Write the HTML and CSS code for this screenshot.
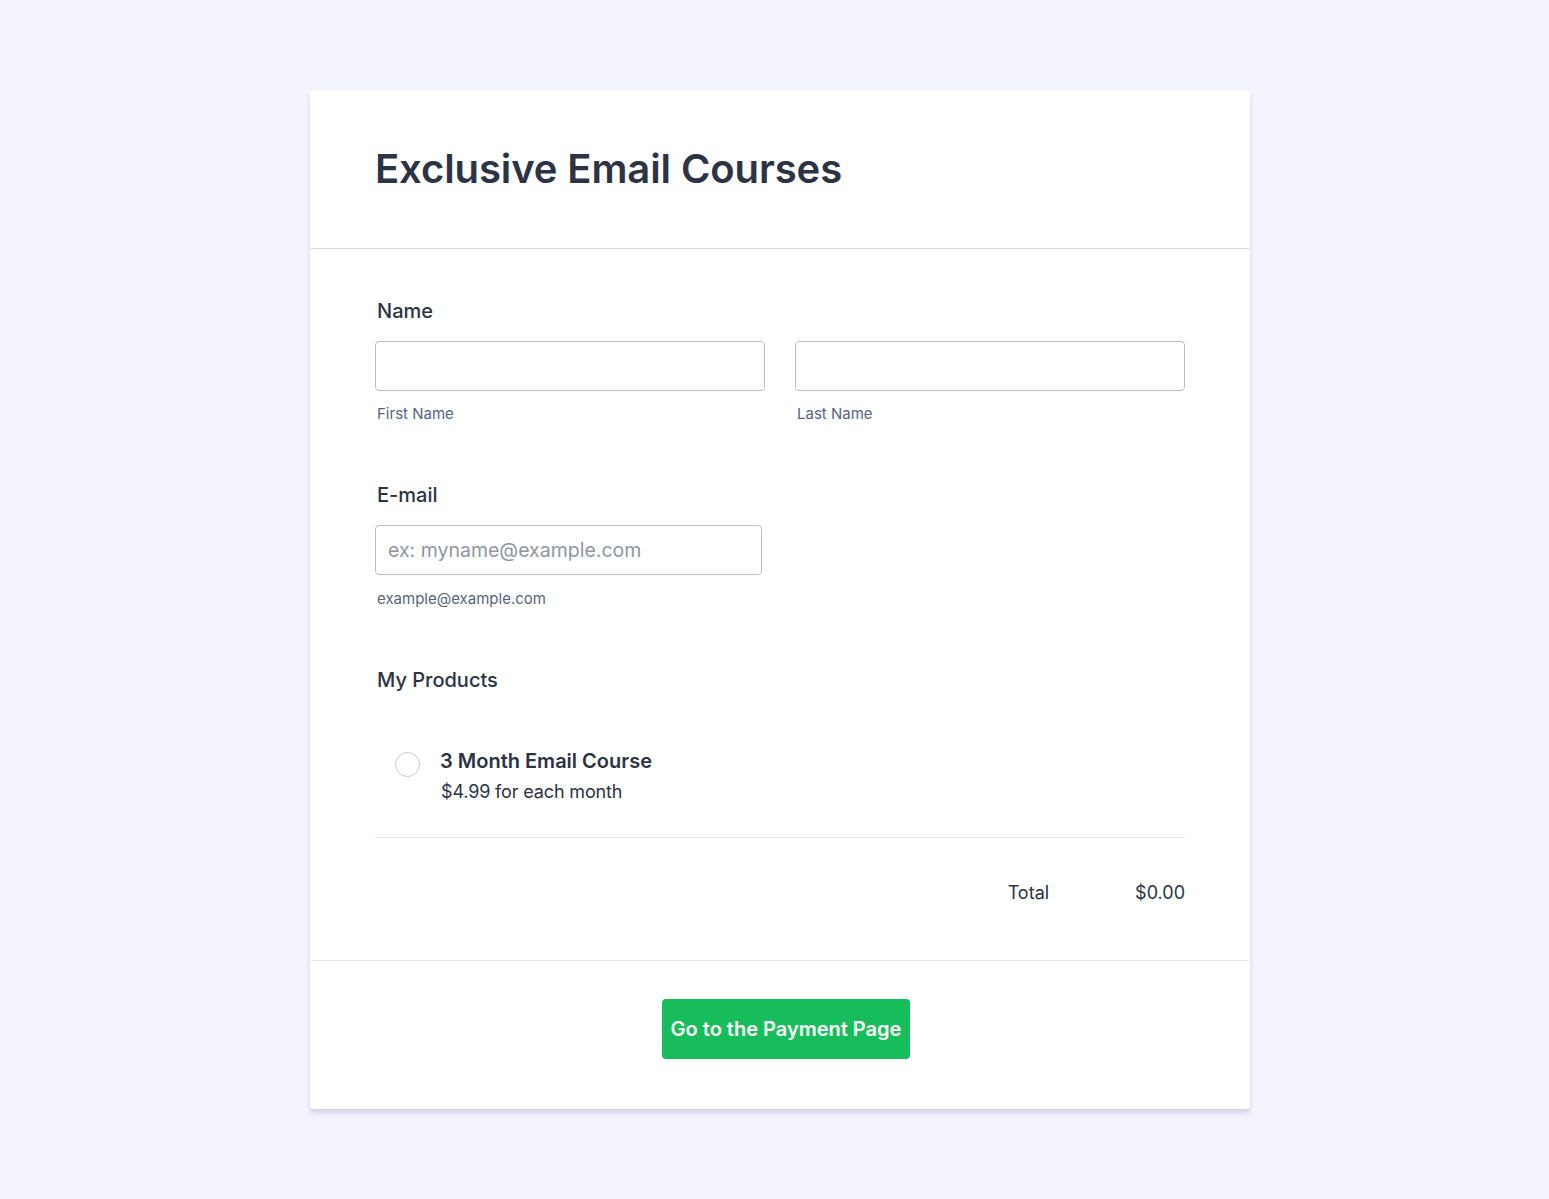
FILE: index.html
```html
<!DOCTYPE html>
<html>
<head>
<meta charset="utf-8">
<link rel="stylesheet" href="styles.css">
</head>
<body>
<main class="card">
  <header class="card-header">
    <h1 class="title">Exclusive Email Courses</h1>
  </header>
  <section class="card-body">
    <div class="field">
      <label class="label">Name</label>
      <div class="name-row">
        <div class="sub">
          <input class="input" type="text">
          <span class="sublabel">First Name</span>
        </div>
        <div class="sub">
          <input class="input" type="text">
          <span class="sublabel">Last Name</span>
        </div>
      </div>
    </div>
    <div class="field email-field">
      <label class="label">E-mail</label>
      <div class="sub email-sub">
        <input class="input" type="text" placeholder="ex: myname@example.com">
        <span class="sublabel">example@example.com</span>
      </div>
    </div>
    <div class="field products-field">
      <label class="label">My Products</label>
      <div class="product">
        <span class="radio"></span>
        <div class="product-info">
          <div class="product-name">3 Month Email Course</div>
          <div class="product-price">$4.99 for each month</div>
        </div>
      </div>
      <div class="total-row">
        <span class="total-label">Total</span>
        <span class="total-value">$0.00</span>
      </div>
    </div>
  </section>
  <footer class="card-footer">
    <button class="pay-btn">Go to the Payment Page</button>
  </footer>
</main>
</body>
</html>
```
FILE: styles.css
```css
* { box-sizing: border-box; }
html, body { margin: 0; padding: 0; }
body {
  background: #f3f3fe;
  font-family: Inter, "Noto Sans", sans-serif;
  color: #2c3345;
  padding: 90px 0 90px;
}
.card {
  width: 940px;
  margin: 0 auto 0 310px;
  background: #fff;
  border-radius: 4px;
  box-shadow: 0 4px 4px rgba(87, 100, 126, 0.21);
}
.card-header {
  padding: 54px 65px 55px 65px;
  border-bottom: 1px solid #dadde6;
}
.title {
  margin: 0;
  font-size: 40px;
  font-weight: 600;
  line-height: 49px;
  color: #2c3345;
  letter-spacing: -0.1px;
}
.card-body {
  padding: 50px 65px 55px 65px;
  border-bottom: 1px solid #e6e6f0;
}
.field { display: flex; flex-direction: column; }
.label {
  font-size: 20px;
  font-weight: 500;
  line-height: 24px;
  padding-left: 2px;
  margin-bottom: 18px;
  color: #2c3345;
}
.name-row {
  display: grid;
  grid-template-columns: 390px 390px;
  gap: 30px;
}
.sub { display: flex; flex-direction: column; }
.input {
  height: 50px;
  width: 100%;
  border: 1px solid #b8bdc9;
  border-radius: 4px;
  padding: 0 12px;
  font-family: Inter, sans-serif;
  font-size: 19.5px;
  color: #2c3345;
  background: #fff;
  outline: none;
}
.input::placeholder { color: #8f96a3; }
.sublabel {
  margin-top: 14px;
  padding-left: 2px;
  font-size: 15px;
  line-height: 18px;
  color: #57647e;
}
.email-field { margin-top: 60px; }
.email-sub { width: 387px; }
.email-sub .sublabel { margin-top: 15px; color: #57647e; }
.products-field { margin-top: 60px; }
.products-field .label { margin-bottom: 0; }
.product {
  display: flex;
  align-items: flex-start;
  gap: 20px;
  padding: 55px 0 33px 20px;
  border-bottom: 1px solid #e3e5ea;
}
.radio {
  width: 25px;
  height: 25px;
  margin-top: 5px;
  border: 1px solid #c3cad8;
  border-radius: 50%;
  flex: none;
}
.product-info { display: flex; flex-direction: column; }
.product-name {
  font-size: 20px;
  font-weight: 600;
  line-height: 28px;
  color: #2c3345;
}
.product-price {
  margin-top: 5px;
  padding-left: 1px;
  font-size: 18px;
  line-height: 24px;
  color: #2c3345;
  letter-spacing: -0.15px;
}
.total-row {
  display: flex;
  justify-content: flex-end;
  gap: 86px;
  padding-top: 43px;
  font-size: 18px;
  line-height: 24px;
  color: #2c3345;
}
.card-footer {
  display: flex;
  justify-content: center;
  padding: 38px 0 50px;
}
.pay-btn {
  height: 60px;
  padding: 0 9px;
  background: #18bd5b;
  border: none;
  border-radius: 4px;
  color: #fff;
  font-family: Inter, sans-serif;
  font-size: 20px;
  font-weight: 600;
  margin-left: 12px;
}
```
